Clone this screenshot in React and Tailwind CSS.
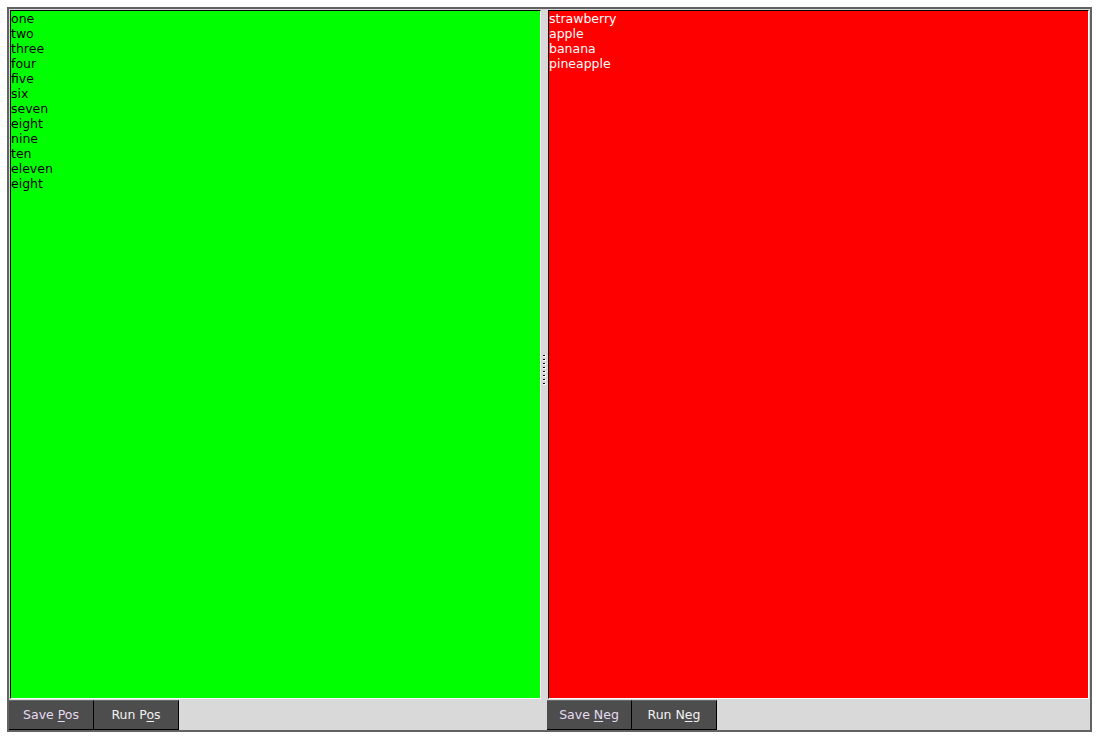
import React from "react";

const posItems = ["one","two","three","four","five","six","seven","eight","nine","ten","eleven","eight"];
const negItems = ["strawberry","apple","banana","pineapple"];

function Btn({ label, u, light }) {
  const idx = label.lastIndexOf(u);
  return (
    <div className={"w-[85px] h-full bg-[#4d4d4d] border-r border-b border-black border-t border-t-[#6a6a6a] flex items-center justify-center text-[12.5px] " + (light ? "text-[#f2f2f2]" : "text-[#e6daf0]")}>
      <span>
        {label.slice(0, idx)}
        <span className="underline underline-offset-2">{u}</span>
        {label.slice(idx + 1)}
      </span>
    </div>
  );
}

function Pane({ items, bg, fg, buttons, width }) {
  return (
    <div className={"flex flex-col h-full " + width}>
      <div className="flex-1 p-[1px] min-h-0">
        <div className={"h-full border-l border-t border-black border-r border-b border-r-white border-b-white leading-[15px] text-[12.5px] " + bg + " " + fg}>
          {items.map((t, i) => (
            <div key={i}>{t}</div>
          ))}
        </div>
      </div>
      <div className="h-[30px] flex">
        {buttons}
      </div>
    </div>
  );
}

export default function App() {
  return (
    <div className="w-[1099px] h-[739px] bg-white pl-[7px] pt-[7px]" style={{ fontFamily: '"DejaVu Sans", sans-serif' }}>
      <div className="w-[1085px] h-[725px] border-2 border-[#626262] bg-[#d9d9d9] flex">
        <Pane
          width="w-[533px]"
          items={posItems}
          bg="bg-[#00ff00]"
          fg="text-black"
          buttons={<><Btn label="Save Pos" u="P" /><Btn label="Run Pos" u="o" light /></>}
        />
        <div className="w-[5px] h-full flex flex-col items-center justify-center">
          <div className="flex flex-col gap-[2px]">
            {[0,1,2,3,4,5,6,7].map((i) => (
              <div key={i} className="w-[3px] h-[2px] bg-black border-r border-b border-white" />
            ))}
          </div>
        </div>
        <Pane
          width="flex-1"
          items={negItems}
          bg="bg-[#ff0000]"
          fg="text-white"
          buttons={<><Btn label="Save Neg" u="N" /><Btn label="Run Neg" u="e" light /></>}
        />
      </div>
    </div>
  );
}
